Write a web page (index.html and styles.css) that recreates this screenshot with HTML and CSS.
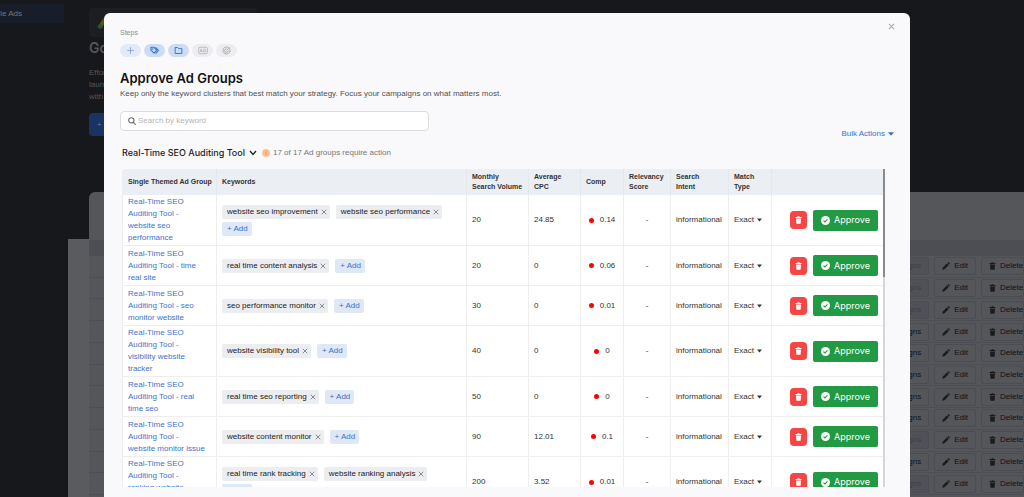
FILE: index.html
```
<!DOCTYPE html>
<html lang="en">
<head>
<meta charset="utf-8">
<title>Approve Ad Groups</title>
<link rel="stylesheet" href="styles.css">
</head>
<body>
<svg class="sprite" aria-hidden="true">
  <symbol id="trash" viewBox="0 0 14 16"><path d="M1 2h3.500l1-1.500h3l1 1.500h3.500v2H1zM2 5h10l-.7 9.500q-.1 1-1.100 1H3.800q-1 0-1.100-1z"/></symbol>
  <symbol id="pencil" viewBox="0 0 16 16"><path d="M10 2.500 13.500 6 5 14.500l-4.500 1 1-4.500zM11 1.500l1-1q.8-.7 1.600 0l1.900 1.900q.7.8 0 1.600l-1 1z"/></symbol>
  <symbol id="check" viewBox="0 0 16 16"><circle cx="8" cy="8" r="8" fill="#fff"/><path d="m4.500 8.200 2.500 2.500 4.500-4.900" fill="none" stroke="#229a43" stroke-width="2"/></symbol>
  <symbol id="cross" viewBox="0 0 8 8"><path d="m1 1 6 6M7 1 1 7" fill="none" stroke="currentColor" stroke-width="1.300"/></symbol>
  <symbol id="caret" viewBox="0 0 10 6"><path d="M0 0h10L5 6z" fill="currentColor"/></symbol>
</svg>

<div class="app">
  <nav class="sidebar"><a class="sidebar-link" href="#">Google Ads</a></nav>
  <main class="main">
    <header class="hero">
      <div class="brand">
        <svg width="14" height="14" viewBox="0 0 14 14"><path d="m8 3-5 8" stroke="#5f5015" stroke-width="4"/><circle cx="3" cy="10.500" r="2.300" fill="#1d5a31"/><path d="m8 3 4 8" stroke="#1d3f70" stroke-width="4" stroke-linecap="round"/></svg>
      </div>
      <h2 class="hero-title">Google Ads</h2>
      <p class="hero-text">Effortlessly create,<br>launch and optimise<br>with AI campaigns.</p>
      <button class="hero-button">+&nbsp; Create</button>
    </header>
    <section class="board">
      <div class="board-back"></div>
      <div class="board-panel">
        <div class="board-top"></div>
        <div class="board-head"></div>
        <div class="board-rows" id="board-rows"></div>
      </div>
    </section>
  </main>
</div>

<div class="modal" role="dialog" aria-labelledby="title">
  <button class="close" aria-label="Close"><svg width="7" height="7"><use href="#cross"/></svg></button>
  <span class="steps-label">Steps</span>
  <div class="steps">
    <span class="step done"><svg width="9" height="9" viewBox="0 0 12 12" fill="none" stroke="currentColor"><path d="M6 1.500v9M1.500 6h9"/></svg></span>
    <span class="step active"><svg width="9" height="9" viewBox="0 0 14 14" fill="none" stroke="currentColor" stroke-width="1.700" stroke-linejoin="round"><path d="M1.500 2h4.700l4.300 4.600-4.200 4.400-4.800-4.700z"/><path d="m8.500 2 4.500 4.800-4.500 5.200"/><circle cx="4.200" cy="4.800" r=".4"/></svg></span>
    <span class="step active"><svg width="9" height="9" viewBox="0 0 12 12" fill="none" stroke="currentColor" stroke-width="1.300" stroke-linejoin="round"><path d="M1.500 2h3.300l1.400 1.500h4.300V10h-9z"/></svg></span>
    <span class="step"><svg width="10" height="9" viewBox="0 0 14 12" fill="none" stroke="currentColor"><rect x="1" y="1.500" width="12" height="9" rx="1.500"/><path d="m3 8 1.500-4L6 8M3.500 7h2M8 4.200V8h1q2-.2 2-1.900t-2-1.900z"/></svg></span>
    <span class="step"><svg width="9" height="9" viewBox="0 0 12 12" fill="none" stroke="currentColor" stroke-width="1.300"><path d="M10.500 4.500A4.700 4.700 0 1 1 7.500 1.500"/><path d="M8.400 6A2.400 2.400 0 1 1 6 3.600M6 6l3-3V1.200M9 3h2"/></svg></span>
  </div>
  <h1 class="title" id="title">Approve Ad Groups</h1>
  <p class="subtitle">Keep only the keyword clusters that best match your strategy. Focus your campaigns on what matters most.</p>
  <div class="toolbar">
    <label class="search">
      <svg width="8" height="8" viewBox="0 0 12 12" fill="none" stroke="#666" stroke-width="1.600"><circle cx="5" cy="5" r="4"/><path d="m8 8 3.500 3.500"/></svg>
      <input type="search" placeholder="Search by keyword" aria-label="Search by keyword">
    </label>
    <button class="bulk">Bulk Actions <svg width="6" height="4"><use href="#caret"/></svg></button>
  </div>
  <div class="group">
    <button class="group-name">Real-Time SEO Auditing Tool <svg width="8" height="6" viewBox="0 0 8 6" fill="none" stroke="currentColor" stroke-width="1.300"><path d="m1 1 3 3.500L7 1"/></svg></button>
    <svg width="8" height="8" viewBox="0 0 8 8"><circle cx="4" cy="4" r="4" fill="#fdbf95"/><path d="M4 2v2.500M4 5.200v1" stroke="#f0935a"/></svg>
    <span class="group-note">17 of 17 Ad groups require action</span>
  </div>
  <div class="table-area">
    <div class="table-view">
      <table class="ad-table">
        <colgroup><col class="c-name"><col><col class="c-volume"><col class="c-cpc"><col class="c-comp"><col class="c-score"><col class="c-intent"><col class="c-match"><col class="c-actions"></colgroup>
        <thead><tr><th>Single Themed Ad Group</th><th>Keywords</th><th>Monthly<br>Search Volume</th><th>Average<br>CPC</th><th>Comp</th><th>Relevancy<br>Score</th><th>Search<br>Intent</th><th>Match<br>Type</th><th aria-label="Actions"></th></tr></thead>
        <tbody id="ad-rows"></tbody>
      </table>
    </div>
    <div class="scrollbar"><div class="thumb"></div></div>
  </div>
</div>
<script src="app.js"></script>
</body>
</html>
```
FILE: styles.css
```
* { box-sizing: border-box; }
body {
  margin: 0;
  height: 100vh;
  overflow: hidden;
  background: #17181c;
  font: 8px/12px "Liberation Sans", Arial, sans-serif;
}
button, input { font: inherit; color: inherit; border: 0; background: none; padding: 0; }
button { cursor: pointer; }
h1, h2, p { margin: 0; }
svg { flex: none; }
.sprite { display: none; }

/* page behind the dialog */
.app { display: flex; height: 100vh; color: #55565a; }
.sidebar { flex: none; width: 64px; padding-top: 4px; }
.sidebar-link {
  display: flex;
  justify-content: flex-end;
  height: 19px;
  padding-right: 42px;
  align-items: center;
  white-space: nowrap;
  background: #171d29;
  color: #74767c;
  text-decoration: none;
}
.main { flex: 1; display: flex; flex-direction: column; padding: 8px 0 0 4px; }
.hero { height: 184px; padding-left: 21px; }
.brand {
  width: 168px;
  height: 29px;
  padding: 8px;
  border-radius: 4px;
  background: #1d1e22;
}
.hero-title { margin-top: 1px; font: 600 14px/20px Inter, sans-serif; }
.hero-text { margin: 9px 0 10px; }
.hero-button {
  height: 23px;
  padding: 0 8px;
  border-radius: 4px;
  background: #193463;
  color: #66758f;
}
.board { flex: 1; display: grid; grid-template: 47px 1fr / 21px 1fr; }
.board-back { grid-area: 2 / 1 / 3 / 3; background: #5a5b5f; }
.board-panel {
  grid-area: 1 / 2 / 3 / 3;
  display: flex;
  flex-direction: column;
  border-radius: 6px 0 0 0;
  background: #55565a;
}
.board-top { height: 48px; }
.board-head { height: 16px; background: #4d4e54; }
.board-rows { flex: 1; display: grid; grid-auto-rows: 1fr; padding-bottom: 2px; }
.board-row {
  display: flex;
  justify-content: flex-end;
  align-items: center;
  gap: 5px;
  border-bottom: 1px solid #4e4f54;
}
.board-button {
  display: flex;
  align-items: center;
  gap: 4px;
  height: 18px;
  padding: 0 7px;
  border: 1px solid #4c4d52;
  border-radius: 2px;
  color: #101114;
  fill: #1b1c20;
  white-space: nowrap;
}
.board-button.wide { padding-right: 0; width: 43px; }
.board-button:disabled { background: #505156; color: #3d3e43; }

/* dialog */
.modal {
  position: fixed;
  inset: 13px 114px 0 104px;
  display: flex;
  flex-direction: column;
  padding: 14px 16px 10px;
  border-radius: 6px 6px 0 0;
  background: #f9f9fb;
  color: #333;
}
.close { position: absolute; top: 10px; right: 15px; display: flex; color: #aaa; }
.steps-label { font-size: 7px; color: #8c8c8c; }
.steps { display: flex; gap: 3px; margin-top: 5px; }
.step {
  display: flex;
  align-items: center;
  justify-content: center;
  width: 21px;
  height: 13px;
  border-radius: 7px;
  background: #ededf1;
  color: #aaa;
}
.step.done { background: #e1eaf6; color: #6f9fe4; }
.step.active { background: #ccdcf3; color: #3a76d5; }
.title { margin-top: 12px; font: 600 13px/18px Inter, sans-serif; color: #111; }
.subtitle { margin-top: 1px; color: #505050; }
.toolbar { display: flex; align-items: flex-start; justify-content: space-between; margin-top: 11px; }
.search {
  display: flex;
  align-items: center;
  gap: 2px;
  width: 309px;
  height: 20px;
  padding: 0 7px;
  border: 1px solid #dcdde0;
  border-radius: 4px;
  background: #fff;
}
.search input { flex: 1; outline: 0; }
.search input::placeholder { color: #b4b4b4; }
.bulk { display: flex; align-items: center; gap: 3px; margin-top: 17px; color: #3a70c8; }
.group { display: flex; align-items: center; gap: 3px; margin: 7px 0 10px 2px; color: #777; }
.group-name { display: flex; align-items: center; gap: 4px; margin-right: 2px; font: 500 9px/12px Inter, sans-serif; color: #222; }
.table-area { flex: 1; min-height: 0; display: flex; margin: 0 9px 0 2px; }
.table-view { flex: 1; overflow: hidden; border-radius: 4px 0 0 0; }
.scrollbar { width: 2px; background: #d6d6d6; }
.thumb { height: 34%; background: #8a8a8a; }

.ad-table { width: 100%; table-layout: fixed; border-collapse: separate; border-spacing: 0; background: #fff; }
.c-name { width: 95px; }
.c-volume { width: 62px; }
.c-cpc { width: 52px; }
.c-comp { width: 43px; }
.c-score { width: 47px; }
.c-intent { width: 58px; }
.c-match { width: 43px; }
.c-actions { width: 111px; }
.ad-table th {
  height: 26px;
  padding: 0 5px;
  background: #ebeef3;
  border-right: 1px solid #e4e7eb;
  font-size: 7px;
  line-height: 10px;
  text-align: left;
  white-space: nowrap;
}
.ad-table td {
  height: 40px;
  padding: 1px 5px;
  border-right: 1px solid #eee;
  border-bottom: 1px solid #eee;
}
.ad-table td:last-child, .ad-table th:last-child { border-right: 0; }
.ad-table th:first-child { padding-left: 6px; }
.ad-table td:first-child { padding-right: 10px; border-left: 1px solid #eee; }
.group-link { color: #3d74cc; text-decoration: none; }
.chips { display: flex; flex-wrap: wrap; gap: 3px 6px; }
.chip, .add {
  display: flex;
  align-items: center;
  gap: 3px;
  height: 14px;
  padding: 0 3px 0 5px;
  border-radius: 2px;
  background: #ebedf1;
  color: #222;
  white-space: nowrap;
}
.chip button { display: flex; color: #888; }
.add { padding-right: 4px; background: #dfe8f7; color: #3a70c8; }
.comp { display: flex; align-items: center; justify-content: center; gap: 6px; }
.comp::before { content: ""; width: 5px; height: 5px; border-radius: 50%; background: #f00; }
.score { text-align: center; }
.match { display: flex; align-items: center; gap: 3px; }
.actions { display: flex; align-items: center; justify-content: flex-end; gap: 6px; }
.delete {
  display: flex;
  align-items: center;
  justify-content: center;
  width: 17px;
  height: 18px;
  border-radius: 4px;
  background: #f54545;
  fill: #fff;
}
.approve {
  display: flex;
  align-items: center;
  justify-content: center;
  gap: 4px;
  width: 65px;
  height: 21px;
  border-radius: 2px;
  background: #229a43;
  color: #fff;
  font: 9px/12px Inter, sans-serif;
}
```
FILE: app.js
```
const icon = (name, w, h) => `<svg width="${w}" height="${h}"><use href="#${name}"/></svg>`;

const groups = [
  ["website seo performance", ["website seo improvement", "website seo performance"], "20", "24.85", "0.14"],
  ["time real site", ["real time content analysis"], "20", "0", "0.06"],
  ["seo monitor website", ["seo performance monitor"], "30", "0", "0.01"],
  ["visibility website tracker", ["website visibility tool"], "40", "0", "0"],
  ["real time seo", ["real time seo reporting"], "50", "0", "0"],
  ["website monitor issue", ["website content monitor"], "90", "12.01", "0.1"],
  ["ranking website analysis", ["real time rank tracking", "website ranking analysis"], "200", "3.52", "0.01"]
];

document.getElementById("ad-rows").innerHTML = groups.map(([name, words, volume, cpc, comp]) => `
  <tr>
    <td><a class="group-link" href="#">Real-Time SEO Auditing Tool - ${name}</a></td>
    <td><div class="chips">${words.map(w => `<span class="chip">${w}<button aria-label="Remove ${w}">${icon("cross", 6, 6)}</button></span>`).join("")}<button class="add">+ Add</button></div></td>
    <td>${volume}</td>
    <td>${cpc}</td>
    <td><div class="comp">${comp}</div></td>
    <td class="score">-</td>
    <td>informational</td>
    <td><button class="match">Exact ${icon("caret", 5, 4)}</button></td>
    <td><div class="actions"><button class="delete" aria-label="Delete">${icon("trash", 7, 8)}</button><button class="approve">${icon("check", 9, 9)}Approve</button></div></td>
  </tr>`).join("");

const locked = [true, true, true, false, false, false, false, false, true, false, true];

document.getElementById("board-rows").innerHTML = locked.map(off => `
  <div class="board-row">
    <button class="board-button" ${off ? "disabled" : ""}>Campaigns</button>
    <button class="board-button">${icon("pencil", 8, 8)}Edit</button>
    <button class="board-button wide">${icon("trash", 7, 8)}Delete</button>
  </div>`).join("");
```
